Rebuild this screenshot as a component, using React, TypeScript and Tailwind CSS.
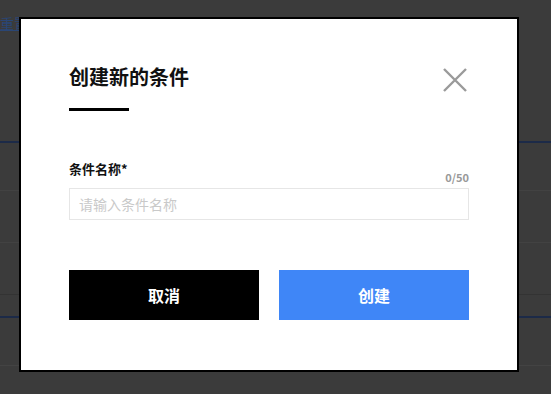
import React from "react";

const font = { fontFamily: '"Noto Sans CJK SC", "Noto Sans", sans-serif' };

function CloseIcon() {
  return (
    <svg width="24" height="24" viewBox="0 0 24 24" className="block">
      <path d="M1 1 L23 23 M23 1 L1 23" stroke="#9a9a9a" strokeWidth="2.4" fill="none" />
    </svg>
  );
}

export default function App() {
  return (
    <div className="relative h-[394px] w-full overflow-hidden bg-[#3b3b3b]" style={font}>
      {/* page behind the overlay */}
      <div className="flex flex-col">
        <div className="h-[141px] pt-[14px]">
          <span className="block text-[14px] leading-[18px] text-[#2a4675] underline">重置条件</span>
        </div>
        <div className="h-[2px] bg-[#1c2a48]" />
        <div className="h-[48px] border-b border-[#424242]" />
        <div className="h-[52px] border-b border-[#424242]" />
        <div className="h-[52px] border-b border-[#333333]" />
        <div className="h-[21px]" />
        <div className="h-[2px] bg-[#1c2a48]" />
        <div className="h-[48px] border-b border-[#434343]" />
      </div>

      {/* modal */}
      <div className="absolute left-[19px] top-[17px] flex h-[355px] w-[500px] flex-col border-2 border-black bg-white px-[48px] pt-[44px]">
        <div className="flex items-start justify-between">
          <h2 className="text-[20px] font-bold leading-[28px] text-[#111]">创建新的条件</h2>
          <button className="mt-[5px] mr-[2px]">
            <CloseIcon />
          </button>
        </div>
        <div className="mt-4 h-[3px] w-[60px] bg-black" />

        <div className="mt-[49px] flex justify-between">
          <label className="text-[13px] font-bold leading-[18px] text-[#111]">条件名称*</label>
          <span className="mt-[9px] text-[11px] font-bold leading-[16px] text-[#999]">0/50</span>
        </div>
        <input
          className="mt-[3px] h-[32px] w-full border border-[#e6e6e6] pl-[9px] text-[14px] outline-none placeholder:text-[#c9c9c9]"
          placeholder="请输入条件名称"
          style={font}
        />

        <div className="mt-[50px] flex gap-5">
          <button className="h-[50px] flex-1 bg-black text-[16px] font-bold text-white">取消</button>
          <button className="h-[50px] flex-1 bg-[#3f86f7] text-[16px] font-bold text-white">创建</button>
        </div>
      </div>
    </div>
  );
}
